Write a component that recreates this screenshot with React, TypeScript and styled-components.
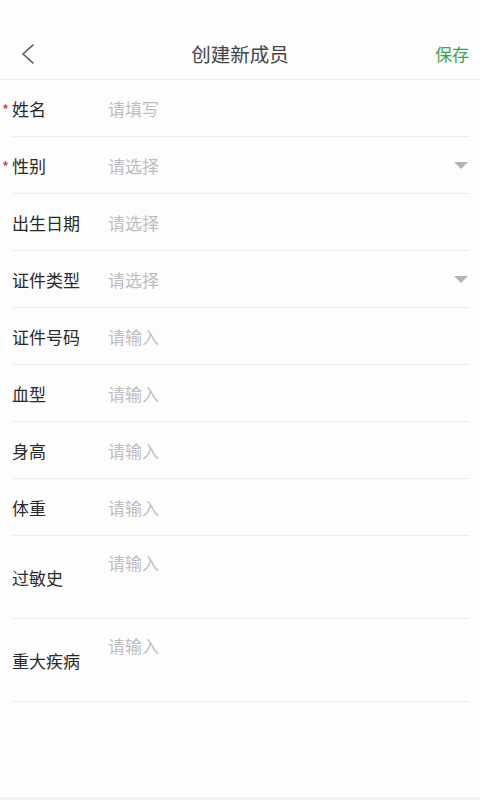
import React from 'react'
import styled, { createGlobalStyle } from 'styled-components'

const GlobalStyle = createGlobalStyle`
  html, body {
    margin: 0;
    padding: 0;
    background: #fdfdfd;
    font-family: "Noto Sans CJK SC", "Noto Sans", sans-serif;
  }
  * {
    box-sizing: border-box;
  }
`

type Field = {
  label: string
  placeholder: string
  required?: boolean
  select?: boolean
  multiline?: boolean
}

const fields: Field[] = [
  { label: '姓名', placeholder: '请填写', required: true },
  { label: '性别', placeholder: '请选择', required: true, select: true },
  { label: '出生日期', placeholder: '请选择' },
  { label: '证件类型', placeholder: '请选择', select: true },
  { label: '证件号码', placeholder: '请输入' },
  { label: '血型', placeholder: '请输入' },
  { label: '身高', placeholder: '请输入' },
  { label: '体重', placeholder: '请输入' },
  { label: '过敏史', placeholder: '请输入', multiline: true },
  { label: '重大疾病', placeholder: '请输入', multiline: true },
]

const Page = styled.div`
  display: flex;
  flex-direction: column;
  min-height: 800px;
  background: #fdfdfd;
`

const NavBar = styled.header`
  display: grid;
  grid-template-columns: 80px 1fr 80px;
  align-items: center;
  height: 80px;
  padding-top: 28px;
  border-bottom: 1px solid #ececec;
`

const BackButton = styled.button`
  justify-self: start;
  display: flex;
  align-items: center;
  margin-left: 20px;
  padding: 0;
  border: none;
  background: none;
  svg {
    width: 18px;
    height: 20px;
  }
`

const Title = styled.h1`
  margin: 0;
  text-align: center;
  font-size: 19.5px;
  font-weight: 400;
  color: #454545;
`

const SaveButton = styled.button`
  justify-self: end;
  margin-right: 11px;
  padding: 0;
  border: none;
  background: none;
  font-family: inherit;
  font-size: 17px;
  color: #3fa34d;
`

const Form = styled.div`
  display: flex;
  flex-direction: column;
  padding: 0 11px 0 12px;
`

const Row = styled.div<{ $multiline?: boolean }>`
  display: flex;
  align-items: ${(p) => (p.$multiline ? 'stretch' : 'center')};
  height: ${(p) => (p.$multiline ? '83px' : '57px')};
  border-bottom: 1px solid #ececec;
`

const Label = styled.span`
  position: relative;
  display: flex;
  align-items: center;
  width: 96px;
  flex-shrink: 0;
  font-size: 17px;
  color: #2a2a2a;
`

const Star = styled.i`
  position: absolute;
  left: -10px;
  top: 50%;
  transform: translateY(-40%);
  font-style: normal;
  font-size: 15px;
  line-height: 1;
  color: #b83c3c;
`

const Placeholder = styled.span<{ $multiline?: boolean }>`
  flex: 1;
  align-self: ${(p) => (p.$multiline ? 'flex-start' : 'center')};
  padding-top: ${(p) => (p.$multiline ? '14px' : '0')};
  font-size: 17px;
  color: #bdbdbd;
`

const Caret = styled.span`
  width: 0;
  height: 0;
  margin-right: 1px;
  border-left: 7.5px solid transparent;
  border-right: 7.5px solid transparent;
  border-top: 7px solid #b4b4b8;
`

const Spacer = styled.div`
  flex: 1;
`

const BottomBar = styled.div`
  height: 3px;
  background: #f2f2f2;
`

export default function App() {
  return (
    <Page>
      <GlobalStyle />
      <NavBar>
        <BackButton aria-label="返回">
          <svg viewBox="0 0 18 20" fill="none">
            <polyline points="13,1 3,10 13,19" stroke="#555" strokeWidth="1.6" strokeLinecap="round" strokeLinejoin="round" />
          </svg>
        </BackButton>
        <Title>创建新成员</Title>
        <SaveButton>保存</SaveButton>
      </NavBar>
      <Form>
        {fields.map((f) => (
          <Row key={f.label} $multiline={f.multiline}>
            <Label>
              {f.required && <Star>*</Star>}
              {f.label}
            </Label>
            <Placeholder $multiline={f.multiline}>{f.placeholder}</Placeholder>
            {f.select && <Caret />}
          </Row>
        ))}
      </Form>
      <Spacer />
      <BottomBar />
    </Page>
  )
}
